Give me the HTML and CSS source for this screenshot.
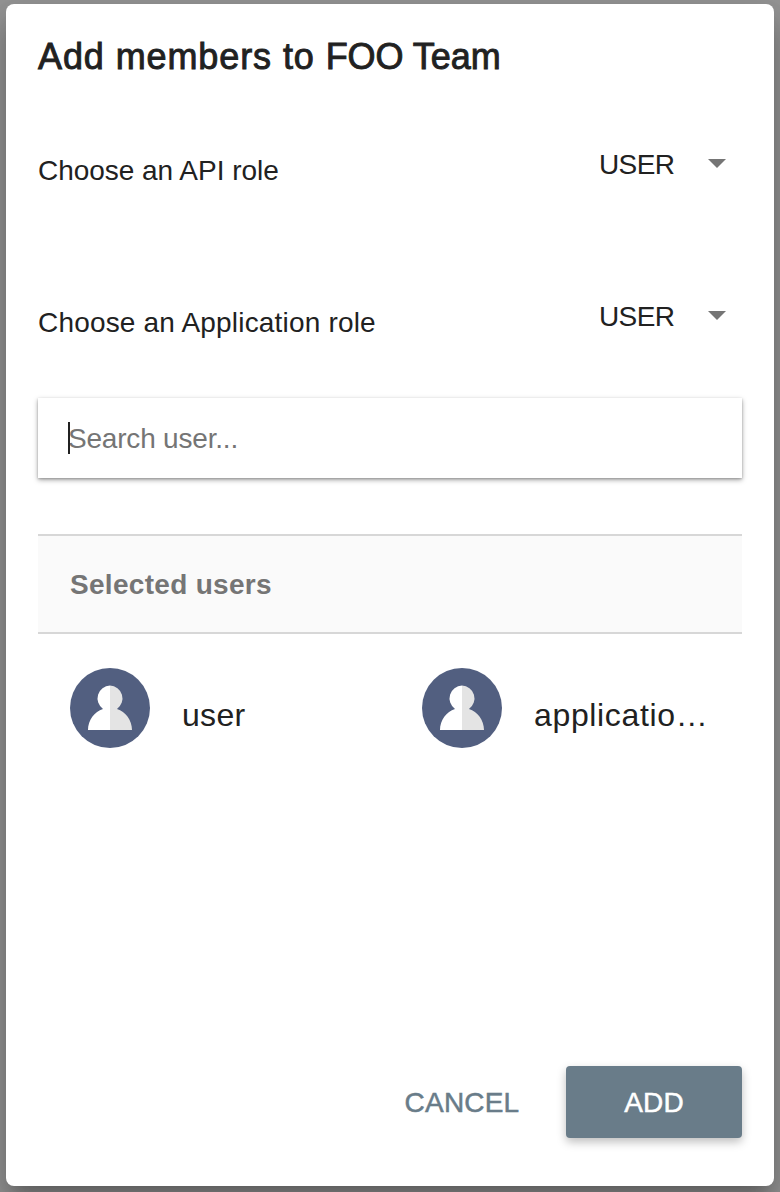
FILE: index.html
```html
<!DOCTYPE html>
<html lang="en">
<head>
<meta charset="utf-8">
<title>Add members</title>
<link rel="stylesheet" href="styles.css">
</head>
<body>
<svg class="symbols" aria-hidden="true">
  <symbol id="person" viewBox="0 0 80 80">
    <circle cx="40" cy="40" r="40" fill="#525f80"/>
    <path fill="#fff" d="M40 17.600a12.800 12.800 0 0 0-7 23.300C24.500 43.500 18 52 18 62h22z"/>
    <path fill="#e4e4e4" d="M40 17.600a12.800 12.800 0 0 1 7 23.300C55.500 43.500 62 52 62 62H40z"/>
  </symbol>
</svg>
<main class="dialog">
  <h1 class="title">Add members to <span class="team">FOO Team</span></h1>
  <section class="roles">
    <div class="role">
      <span class="role-label api">Choose an API role</span>
      <div class="select"><span class="select-value">USER</span><svg class="arrow" viewBox="0 0 18 9"><path d="M0 0h18L9 9z"/></svg></div>
    </div>
    <div class="role">
      <span class="role-label app">Choose an Application role</span>
      <div class="select"><span class="select-value">USER</span><svg class="arrow" viewBox="0 0 18 9"><path d="M0 0h18L9 9z"/></svg></div>
    </div>
  </section>
  <div class="search"><span class="placeholder">Search user...</span></div>
  <h2 class="subheader">Selected users</h2>
  <ul class="users">
    <li class="user"><svg class="avatar"><use href="#person"/></svg><span class="name">user</span></li>
    <li class="user"><svg class="avatar"><use href="#person"/></svg><span class="name long">applicatio…</span></li>
  </ul>
  <footer class="actions">
    <button class="button cancel">CANCEL</button>
    <button class="button add">ADD</button>
  </footer>
</main>
</body>
</html>
```

FILE: styles.css
```css
* { box-sizing: border-box; }
body {
  margin: 0;
  height: 1192px;
  padding: 4px 6px 6px;
  overflow: hidden;
  background: #959595;
  color: #212121;
  font: 28px/42px "Liberation Sans", Arial, sans-serif;
}
.symbols { display: none; }
.dialog {
  display: flex;
  flex-direction: column;
  height: 1182px;
  padding: 32px 32px 48px;
  border-radius: 8px;
  background: #fff;
  box-shadow: 0 14px 16px -8px rgba(0,0,0,.2), 0 26px 38px 4px rgba(0,0,0,.14), 0 10px 32px 6px rgba(0,0,0,.12);
}
.title {
  margin: 0 0 66px;
  font-size: 36px;
  font-weight: 400;
  letter-spacing: .9px;
  -webkit-text-stroke: .9px currentColor;
}
.team { letter-spacing: -.05px; }
.roles { height: 254px; }
.role { display: flex; justify-content: space-between; height: 152px; }
.role-label { padding-top: 6px; }
.api { letter-spacing: -.03px; }
.app { letter-spacing: .18px; }
.select { display: flex; width: 143px; padding-right: 16px; justify-content: space-between; }
.select-value { letter-spacing: -.6px; }
.arrow { width: 18px; height: 9px; margin-top: 15px; fill: #757575; }
.search {
  position: relative;
  height: 80px;
  padding: 20px 30px;
  background: #fff;
  color: #757575;
  letter-spacing: -.2px;
  box-shadow: 0 2px 5px rgba(0,0,0,.35), 0 1px 2px rgba(0,0,0,.2);
}
.search::before {
  content: "";
  position: absolute;
  left: 30px;
  top: 24px;
  width: 2px;
  height: 32px;
  background: #212121;
}
.subheader {
  height: 100px;
  margin: 56px 0 0;
  padding: 28px 32px;
  border: solid #d7d7d7;
  border-width: 2px 0;
  background: #fafafa;
  color: #757575;
  font-size: 28px;
  letter-spacing: .3px;
}
.users {
  display: grid;
  grid-template-columns: 1fr 1fr;
  margin: 0;
  padding: 34px 0 0;
  list-style: none;
}
.user { display: flex; gap: 32px; padding-left: 32px; }
.avatar { width: 80px; height: 80px; }
.name { padding-top: 26px; font-size: 32px; letter-spacing: .3px; white-space: nowrap; }
.long { letter-spacing: .65px; }
.actions { display: flex; justify-content: flex-end; gap: 16px; margin-top: auto; }
.button {
  height: 72px;
  padding: 2px 0 0;
  border: 0;
  border-radius: 4px;
  background: none;
  color: #697c89;
  font: 28px/70px "Liberation Sans", Arial, sans-serif;
  letter-spacing: .2px;
  -webkit-text-stroke: .5px currentColor;
}
.cancel { width: 176px; }
.add {
  width: 176px;
  background: #697c89;
  color: #fff;
  box-shadow: 0 4px 10px rgba(0,0,0,.26);
}
```
